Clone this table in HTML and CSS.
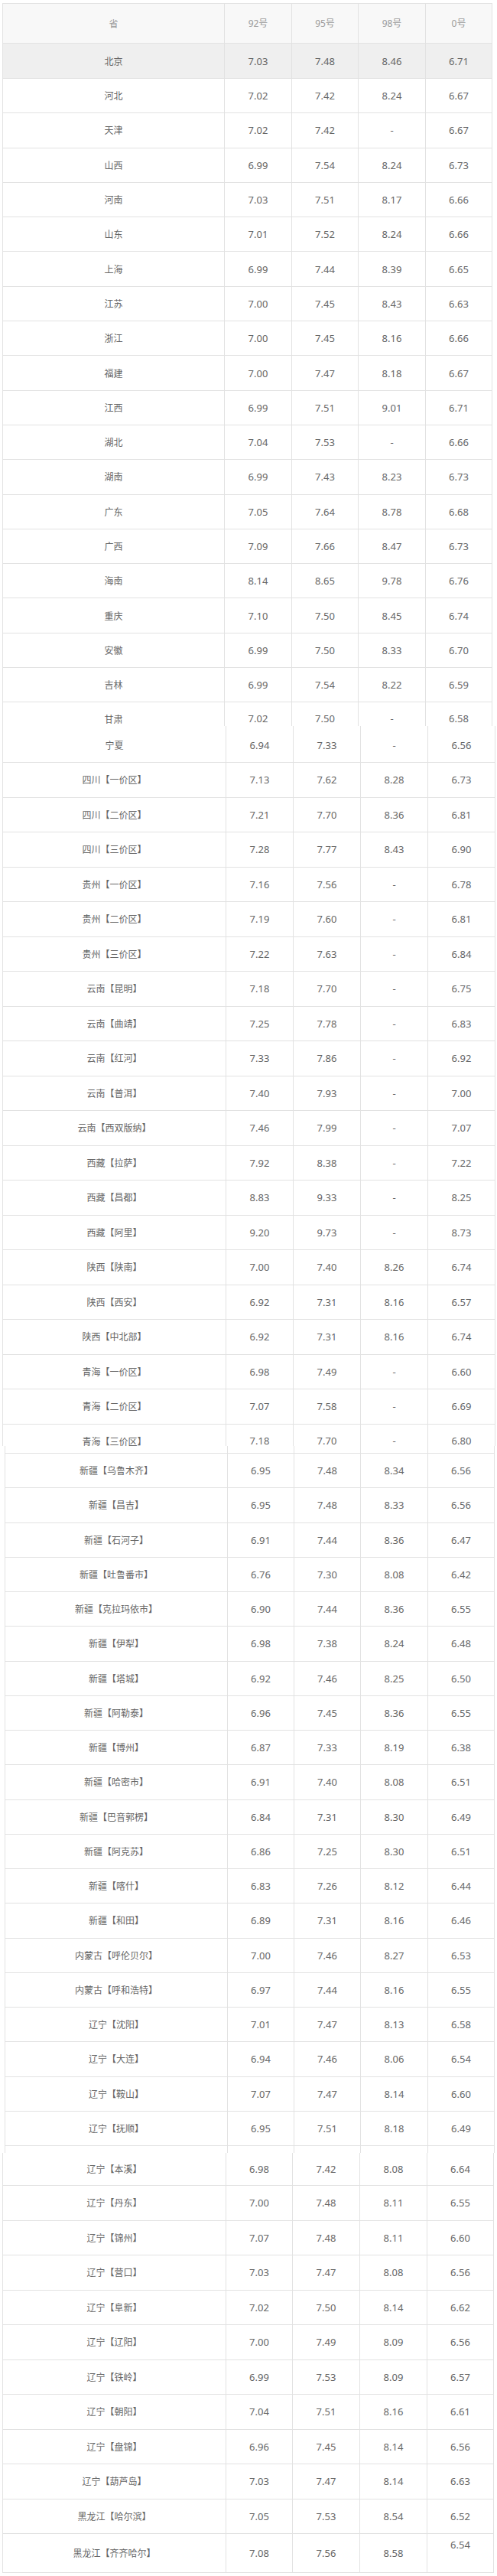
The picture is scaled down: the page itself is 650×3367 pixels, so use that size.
FILE: index.html
```html
<!DOCTYPE html>
<html lang="zh-CN">
<head>
<meta charset="utf-8">
<title>油价表</title>
<link rel="stylesheet" href="styles.css">
</head>
<body>
<main class="sheet">

<section class="seg seg1">
  <div class="tbl">
    <div class="row head"><div class="c name">省</div><div class="c">92号</div><div class="c">95号</div><div class="c">98号</div><div class="c">0号</div></div>
    <div class="row hl"><div class="c name">北京</div><div class="c">7.03</div><div class="c">7.48</div><div class="c">8.46</div><div class="c">6.71</div></div>
    <div class="row"><div class="c name">河北</div><div class="c">7.02</div><div class="c">7.42</div><div class="c">8.24</div><div class="c">6.67</div></div>
    <div class="row"><div class="c name">天津</div><div class="c">7.02</div><div class="c">7.42</div><div class="c">-</div><div class="c">6.67</div></div>
    <div class="row"><div class="c name">山西</div><div class="c">6.99</div><div class="c">7.54</div><div class="c">8.24</div><div class="c">6.73</div></div>
    <div class="row"><div class="c name">河南</div><div class="c">7.03</div><div class="c">7.51</div><div class="c">8.17</div><div class="c">6.66</div></div>
    <div class="row"><div class="c name">山东</div><div class="c">7.01</div><div class="c">7.52</div><div class="c">8.24</div><div class="c">6.66</div></div>
    <div class="row"><div class="c name">上海</div><div class="c">6.99</div><div class="c">7.44</div><div class="c">8.39</div><div class="c">6.65</div></div>
    <div class="row"><div class="c name">江苏</div><div class="c">7.00</div><div class="c">7.45</div><div class="c">8.43</div><div class="c">6.63</div></div>
    <div class="row"><div class="c name">浙江</div><div class="c">7.00</div><div class="c">7.45</div><div class="c">8.16</div><div class="c">6.66</div></div>
    <div class="row"><div class="c name">福建</div><div class="c">7.00</div><div class="c">7.47</div><div class="c">8.18</div><div class="c">6.67</div></div>
    <div class="row"><div class="c name">江西</div><div class="c">6.99</div><div class="c">7.51</div><div class="c">9.01</div><div class="c">6.71</div></div>
    <div class="row"><div class="c name">湖北</div><div class="c">7.04</div><div class="c">7.53</div><div class="c">-</div><div class="c">6.66</div></div>
    <div class="row"><div class="c name">湖南</div><div class="c">6.99</div><div class="c">7.43</div><div class="c">8.23</div><div class="c">6.73</div></div>
    <div class="row"><div class="c name">广东</div><div class="c">7.05</div><div class="c">7.64</div><div class="c">8.78</div><div class="c">6.68</div></div>
    <div class="row"><div class="c name">广西</div><div class="c">7.09</div><div class="c">7.66</div><div class="c">8.47</div><div class="c">6.73</div></div>
    <div class="row"><div class="c name">海南</div><div class="c">8.14</div><div class="c">8.65</div><div class="c">9.78</div><div class="c">6.76</div></div>
    <div class="row"><div class="c name">重庆</div><div class="c">7.10</div><div class="c">7.50</div><div class="c">8.45</div><div class="c">6.74</div></div>
    <div class="row"><div class="c name">安徽</div><div class="c">6.99</div><div class="c">7.50</div><div class="c">8.33</div><div class="c">6.70</div></div>
    <div class="row"><div class="c name">吉林</div><div class="c">6.99</div><div class="c">7.54</div><div class="c">8.22</div><div class="c">6.59</div></div>
    <div class="row cut cut1"><div class="c name">甘肃</div><div class="c">7.02</div><div class="c">7.50</div><div class="c">-</div><div class="c">6.58</div></div>
  </div>
</section>

<section class="seg seg2">
  <div class="tbl">
    <div class="row first"><div class="c name">宁夏</div><div class="c">6.94</div><div class="c">7.33</div><div class="c">-</div><div class="c">6.56</div></div>
    <div class="row"><div class="c name">四川【一价区】</div><div class="c">7.13</div><div class="c">7.62</div><div class="c">8.28</div><div class="c">6.73</div></div>
    <div class="row"><div class="c name">四川【二价区】</div><div class="c">7.21</div><div class="c">7.70</div><div class="c">8.36</div><div class="c">6.81</div></div>
    <div class="row"><div class="c name">四川【三价区】</div><div class="c">7.28</div><div class="c">7.77</div><div class="c">8.43</div><div class="c">6.90</div></div>
    <div class="row"><div class="c name">贵州【一价区】</div><div class="c">7.16</div><div class="c">7.56</div><div class="c">-</div><div class="c">6.78</div></div>
    <div class="row"><div class="c name">贵州【二价区】</div><div class="c">7.19</div><div class="c">7.60</div><div class="c">-</div><div class="c">6.81</div></div>
    <div class="row"><div class="c name">贵州【三价区】</div><div class="c">7.22</div><div class="c">7.63</div><div class="c">-</div><div class="c">6.84</div></div>
    <div class="row"><div class="c name">云南【昆明】</div><div class="c">7.18</div><div class="c">7.70</div><div class="c">-</div><div class="c">6.75</div></div>
    <div class="row"><div class="c name">云南【曲靖】</div><div class="c">7.25</div><div class="c">7.78</div><div class="c">-</div><div class="c">6.83</div></div>
    <div class="row"><div class="c name">云南【红河】</div><div class="c">7.33</div><div class="c">7.86</div><div class="c">-</div><div class="c">6.92</div></div>
    <div class="row"><div class="c name">云南【普洱】</div><div class="c">7.40</div><div class="c">7.93</div><div class="c">-</div><div class="c">7.00</div></div>
    <div class="row"><div class="c name">云南【西双版纳】</div><div class="c">7.46</div><div class="c">7.99</div><div class="c">-</div><div class="c">7.07</div></div>
    <div class="row"><div class="c name">西藏【拉萨】</div><div class="c">7.92</div><div class="c">8.38</div><div class="c">-</div><div class="c">7.22</div></div>
    <div class="row"><div class="c name">西藏【昌都】</div><div class="c">8.83</div><div class="c">9.33</div><div class="c">-</div><div class="c">8.25</div></div>
    <div class="row"><div class="c name">西藏【阿里】</div><div class="c">9.20</div><div class="c">9.73</div><div class="c">-</div><div class="c">8.73</div></div>
    <div class="row"><div class="c name">陕西【陕南】</div><div class="c">7.00</div><div class="c">7.40</div><div class="c">8.26</div><div class="c">6.74</div></div>
    <div class="row"><div class="c name">陕西【西安】</div><div class="c">6.92</div><div class="c">7.31</div><div class="c">8.16</div><div class="c">6.57</div></div>
    <div class="row"><div class="c name">陕西【中北部】</div><div class="c">6.92</div><div class="c">7.31</div><div class="c">8.16</div><div class="c">6.74</div></div>
    <div class="row"><div class="c name">青海【一价区】</div><div class="c">6.98</div><div class="c">7.49</div><div class="c">-</div><div class="c">6.60</div></div>
    <div class="row"><div class="c name">青海【二价区】</div><div class="c">7.07</div><div class="c">7.58</div><div class="c">-</div><div class="c">6.69</div></div>
    <div class="row cut cut2"><div class="c name">青海【三价区】</div><div class="c">7.18</div><div class="c">7.70</div><div class="c">-</div><div class="c">6.80</div></div>
  </div>
</section>

<section class="seg seg3">
  <div class="tbl">
    <div class="row sliver"><div class="c name"></div><div class="c"></div><div class="c"></div><div class="c"></div><div class="c"></div></div>
    <div class="row"><div class="c name">新疆【乌鲁木齐】</div><div class="c">6.95</div><div class="c">7.48</div><div class="c">8.34</div><div class="c">6.56</div></div>
    <div class="row"><div class="c name">新疆【昌吉】</div><div class="c">6.95</div><div class="c">7.48</div><div class="c">8.33</div><div class="c">6.56</div></div>
    <div class="row"><div class="c name">新疆【石河子】</div><div class="c">6.91</div><div class="c">7.44</div><div class="c">8.36</div><div class="c">6.47</div></div>
    <div class="row"><div class="c name">新疆【吐鲁番市】</div><div class="c">6.76</div><div class="c">7.30</div><div class="c">8.08</div><div class="c">6.42</div></div>
    <div class="row"><div class="c name">新疆【克拉玛依市】</div><div class="c">6.90</div><div class="c">7.44</div><div class="c">8.36</div><div class="c">6.55</div></div>
    <div class="row"><div class="c name">新疆【伊犁】</div><div class="c">6.98</div><div class="c">7.38</div><div class="c">8.24</div><div class="c">6.48</div></div>
    <div class="row"><div class="c name">新疆【塔城】</div><div class="c">6.92</div><div class="c">7.46</div><div class="c">8.25</div><div class="c">6.50</div></div>
    <div class="row"><div class="c name">新疆【阿勒泰】</div><div class="c">6.96</div><div class="c">7.45</div><div class="c">8.36</div><div class="c">6.55</div></div>
    <div class="row"><div class="c name">新疆【博州】</div><div class="c">6.87</div><div class="c">7.33</div><div class="c">8.19</div><div class="c">6.38</div></div>
    <div class="row"><div class="c name">新疆【哈密市】</div><div class="c">6.91</div><div class="c">7.40</div><div class="c">8.08</div><div class="c">6.51</div></div>
    <div class="row"><div class="c name">新疆【巴音郭楞】</div><div class="c">6.84</div><div class="c">7.31</div><div class="c">8.30</div><div class="c">6.49</div></div>
    <div class="row"><div class="c name">新疆【阿克苏】</div><div class="c">6.86</div><div class="c">7.25</div><div class="c">8.30</div><div class="c">6.51</div></div>
    <div class="row"><div class="c name">新疆【喀什】</div><div class="c">6.83</div><div class="c">7.26</div><div class="c">8.12</div><div class="c">6.44</div></div>
    <div class="row"><div class="c name">新疆【和田】</div><div class="c">6.89</div><div class="c">7.31</div><div class="c">8.16</div><div class="c">6.46</div></div>
    <div class="row"><div class="c name">内蒙古【呼伦贝尔】</div><div class="c">7.00</div><div class="c">7.46</div><div class="c">8.27</div><div class="c">6.53</div></div>
    <div class="row"><div class="c name">内蒙古【呼和浩特】</div><div class="c">6.97</div><div class="c">7.44</div><div class="c">8.16</div><div class="c">6.55</div></div>
    <div class="row"><div class="c name">辽宁【沈阳】</div><div class="c">7.01</div><div class="c">7.47</div><div class="c">8.13</div><div class="c">6.58</div></div>
    <div class="row"><div class="c name">辽宁【大连】</div><div class="c">6.94</div><div class="c">7.46</div><div class="c">8.06</div><div class="c">6.54</div></div>
    <div class="row"><div class="c name">辽宁【鞍山】</div><div class="c">7.07</div><div class="c">7.47</div><div class="c">8.14</div><div class="c">6.60</div></div>
    <div class="row"><div class="c name">辽宁【抚顺】</div><div class="c">6.95</div><div class="c">7.51</div><div class="c">8.18</div><div class="c">6.49</div></div>
    <div class="row"><div class="c name"></div><div class="c"></div><div class="c"></div><div class="c"></div><div class="c"></div></div>
  </div>
</section>

<section class="seg seg4">
  <div class="tbl">
    <div class="row first"><div class="c name">辽宁【本溪】</div><div class="c">6.98</div><div class="c">7.42</div><div class="c">8.08</div><div class="c">6.64</div></div>
    <div class="row"><div class="c name">辽宁【丹东】</div><div class="c">7.00</div><div class="c">7.48</div><div class="c">8.11</div><div class="c">6.55</div></div>
    <div class="row"><div class="c name">辽宁【锦州】</div><div class="c">7.07</div><div class="c">7.48</div><div class="c">8.11</div><div class="c">6.60</div></div>
    <div class="row"><div class="c name">辽宁【营口】</div><div class="c">7.03</div><div class="c">7.47</div><div class="c">8.08</div><div class="c">6.56</div></div>
    <div class="row"><div class="c name">辽宁【阜新】</div><div class="c">7.02</div><div class="c">7.50</div><div class="c">8.14</div><div class="c">6.62</div></div>
    <div class="row"><div class="c name">辽宁【辽阳】</div><div class="c">7.00</div><div class="c">7.49</div><div class="c">8.09</div><div class="c">6.56</div></div>
    <div class="row"><div class="c name">辽宁【铁岭】</div><div class="c">6.99</div><div class="c">7.53</div><div class="c">8.09</div><div class="c">6.57</div></div>
    <div class="row"><div class="c name">辽宁【朝阳】</div><div class="c">7.04</div><div class="c">7.51</div><div class="c">8.16</div><div class="c">6.61</div></div>
    <div class="row"><div class="c name">辽宁【盘锦】</div><div class="c">6.96</div><div class="c">7.45</div><div class="c">8.14</div><div class="c">6.56</div></div>
    <div class="row"><div class="c name">辽宁【葫芦岛】</div><div class="c">7.03</div><div class="c">7.47</div><div class="c">8.14</div><div class="c">6.63</div></div>
    <div class="row"><div class="c name">黑龙江【哈尔滨】</div><div class="c">7.05</div><div class="c">7.53</div><div class="c">8.54</div><div class="c">6.52</div></div>
    <div class="row last"><div class="c name">黑龙江【齐齐哈尔】</div><div class="c">7.08</div><div class="c">7.56</div><div class="c">8.58</div><div class="c top">6.54</div></div>
  </div>
</section>

</main>
</body>
</html>
```

FILE: styles.css
```css
* { box-sizing: border-box; }

html, body {
  margin: 0;
  padding: 0;
  background: #ffffff;
}

body {
  width: 650px;
  height: 3367px;
  overflow: hidden;
  font-family: "Noto Sans", "Noto Sans CJK SC", sans-serif;
  color: #666666;
}

.sheet {
  display: flex;
  flex-direction: column;
}

.seg {
  overflow: hidden;
  flex: none;
}

.tbl {
  display: flex;
  flex-direction: column;
  border-left: 1px solid #e2e2e2;
}

.row {
  display: grid;
  height: 45.3px;
  flex: none;
}

.c {
  display: flex;
  align-items: center;
  justify-content: center;
  border-right: 1px solid #e2e2e2;
  border-bottom: 1px solid #e2e2e2;
  font-size: 13px;
  line-height: 18px;
  white-space: nowrap;
}

.c.name {
  font-family: "Noto Sans CJK SC", sans-serif;
  font-size: 12px;
}

/* rows cut by the seam between the stitched screenshots */
.row.cut .c { line-height: 13px; }
.row.cut1 .c { align-items: flex-start; padding-top: 15px; }
.row.cut2 .c { align-items: flex-start; padding-top: 15px; }

/* segment 1 */
.seg1 {
  height: 949px;
  padding-top: 4px;
  padding-left: 3px;
}
.seg1 .tbl { border-top: 1px solid #e2e2e2; width: 641px; }
.seg1 .row { grid-template-columns: 290px 88px 87px 88px 87px; }

.row.head { height: 52px; background: #f8f8f8; }
.row.head .c { color: #9a9a9a; font-size: 12px; }
.row.head .c.name { font-size: 12px; }
.row.hl { height: 46px; background: #efefef; }

/* segment 2 */
.seg2 {
  height: 941px;
  padding-left: 3px;
}
.seg2 .tbl { width: 645px; }
.seg2 .row { grid-template-columns: 292px 88px 88px 88px 88px; height: 45.5px; }
.seg2 .row.first { height: 48px; }
.seg2 .row.first .c { padding-top: 2px; }

/* segment 3 */
.seg3 {
  height: 924px;
  padding-left: 6px;
}
.seg3 .tbl { width: 641px; }
.seg3 .row { grid-template-columns: 291px 87px 87px 88px 87px; height: 45.25px; }
.seg3 .row.sliver { height: 10px; }

/* segment 4 */
.seg4 {
  height: 553px;
  padding-left: 3px;
}
.seg4 .tbl { width: 643px; }
.seg4 .row { grid-template-columns: 292px 87px 88px 88px 87px; height: 45.5px; }
.seg4 .row.first { height: 43px; }
.seg4 .row.first .c { padding-bottom: 1px; }
.seg4 .row.last { height: 51px; }
.c.top { align-items: flex-start; padding-top: 5px; }
```
